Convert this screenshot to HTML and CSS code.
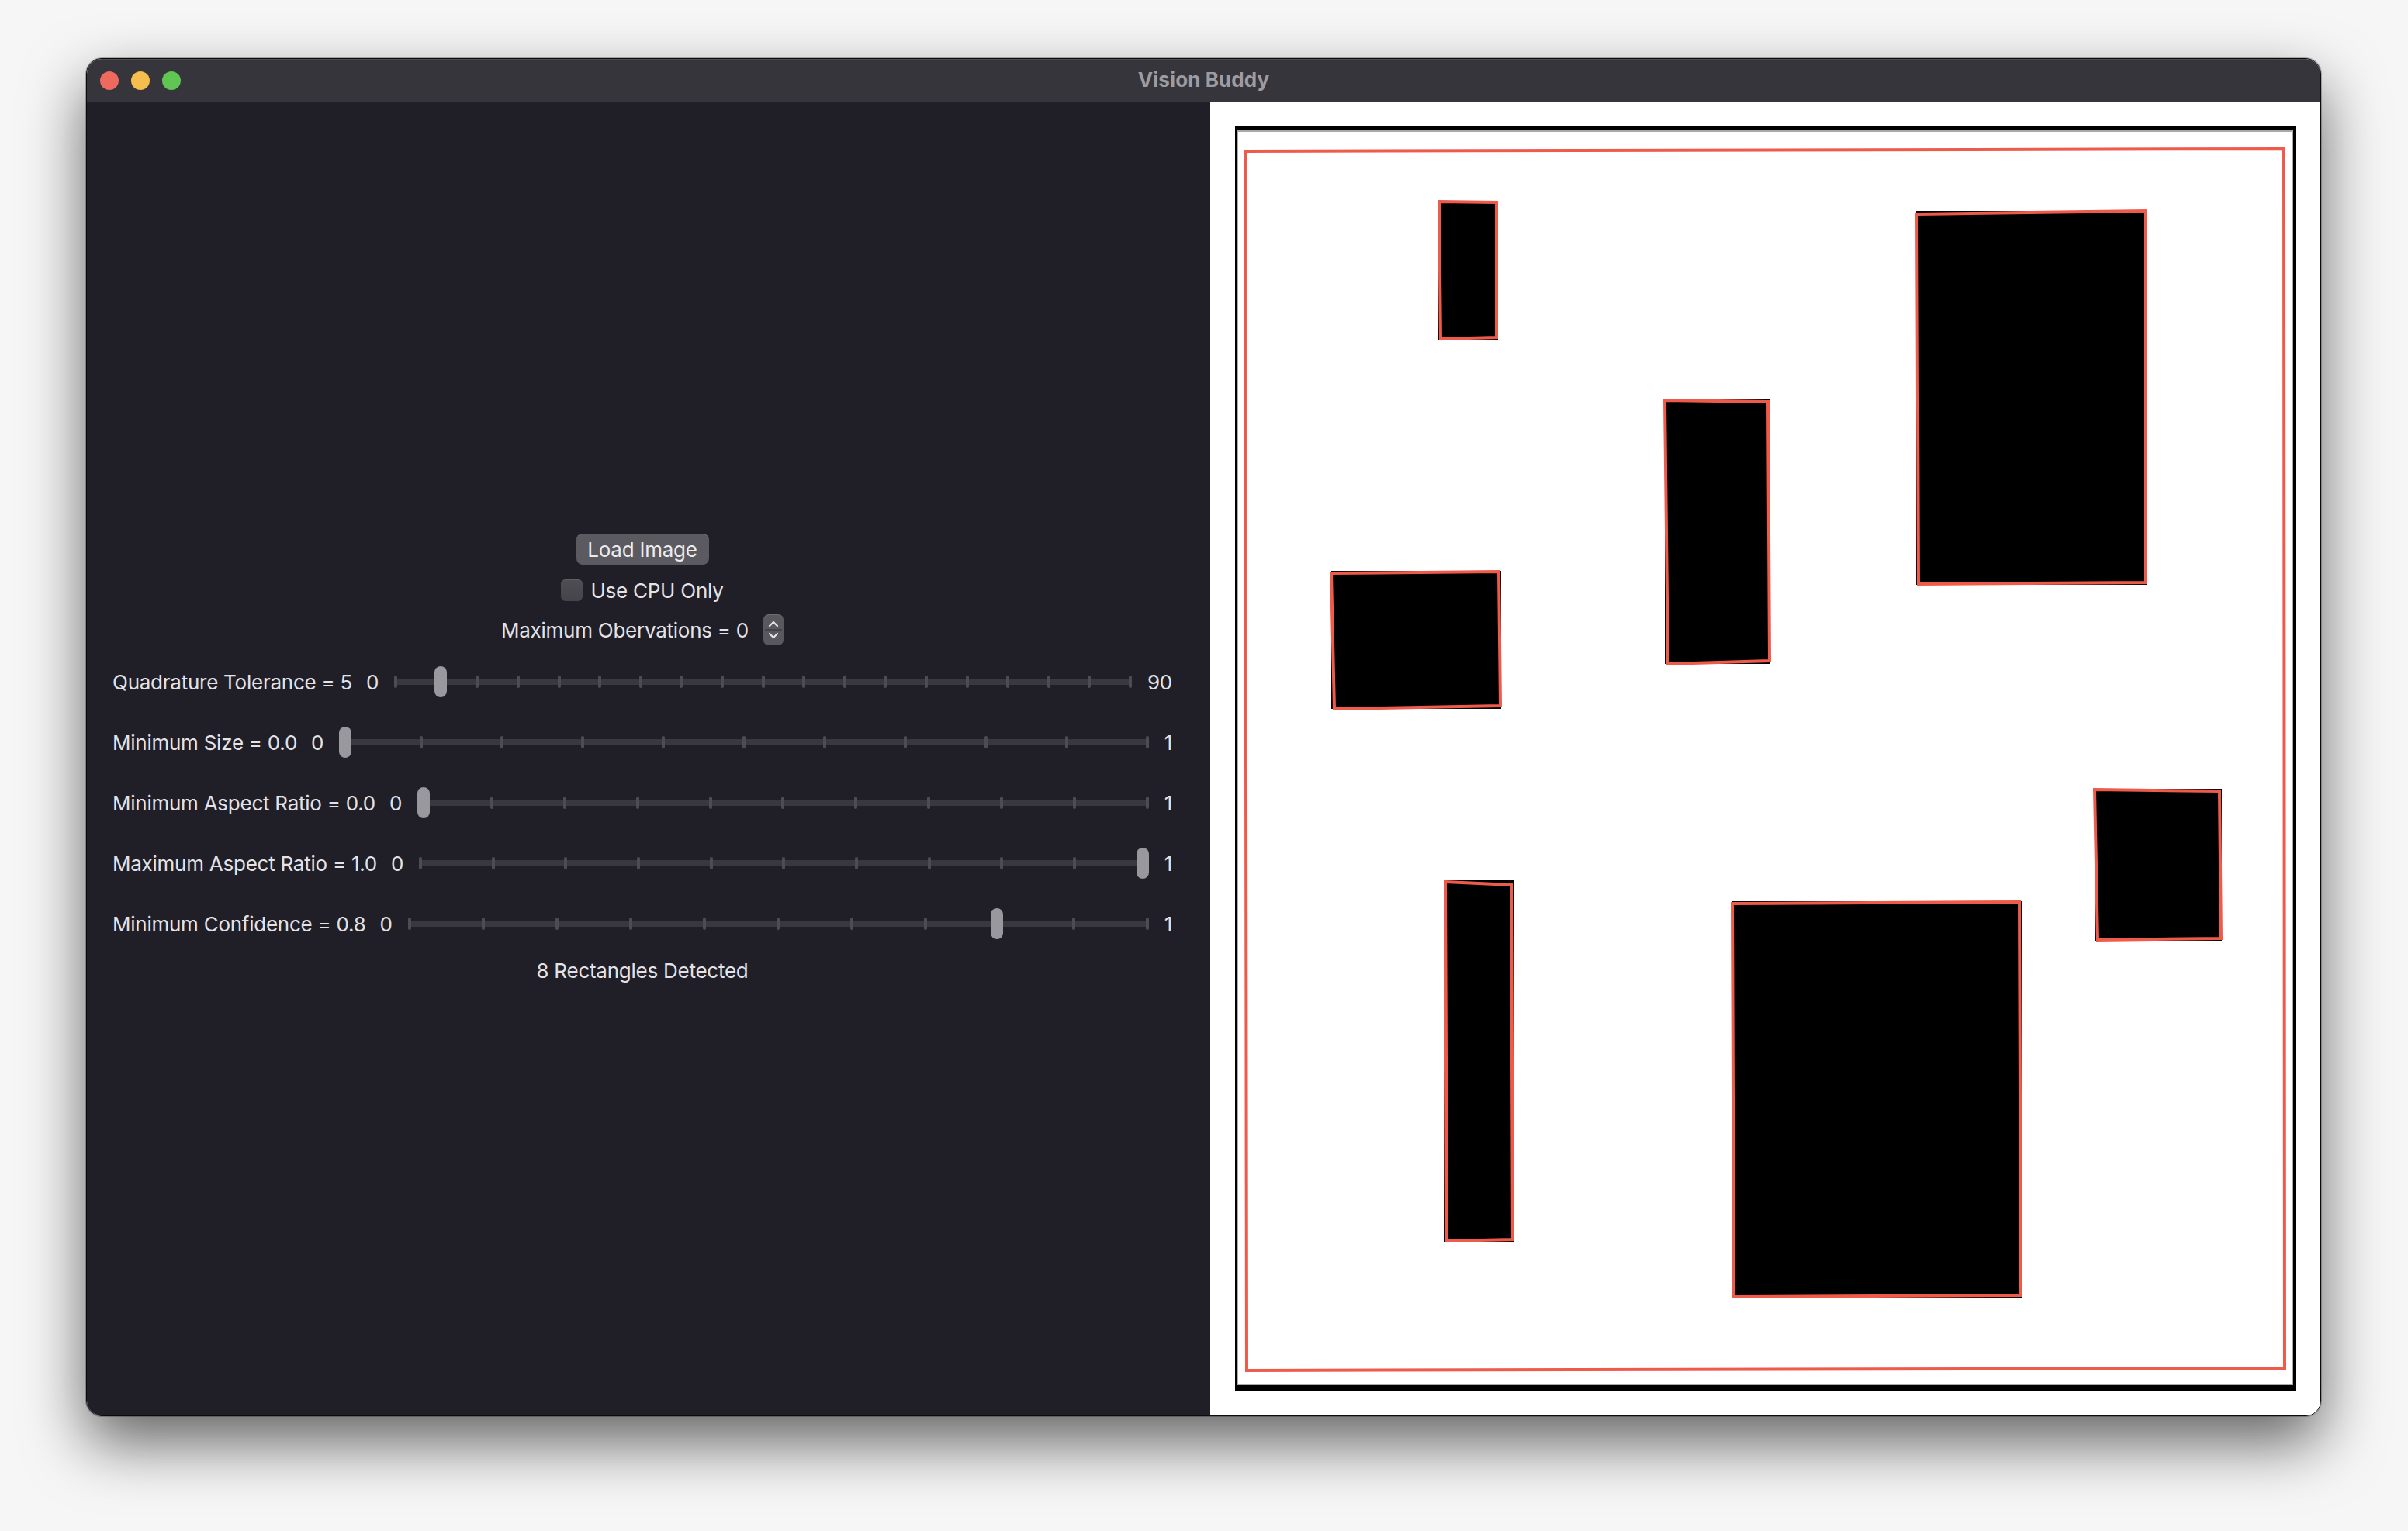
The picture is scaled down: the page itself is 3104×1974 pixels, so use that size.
FILE: index.html
```html
<!DOCTYPE html>
<html>
<head>
<meta charset="utf-8">
<title>Vision Buddy</title>
<link rel="stylesheet" href="styles.css">
</head>
<body>
<div class="window">
  <div class="titlebar">
    <div class="lights">
      <span class="light red"></span>
      <span class="light yellow"></span>
      <span class="light green"></span>
    </div>
    <div class="title">Vision Buddy</div>
  </div>
  <div class="content">
    <div class="controls">
      <div class="button">Load Image</div>
      <div class="check-row">
        <span class="checkbox"></span>
        <span class="text">Use CPU Only</span>
      </div>
      <div class="stepper-row">
        <span class="text">Maximum Obervations = 0</span>
        <span class="stepper">
          <svg width="26" height="40" viewBox="0 0 26 40">
            <path d="M8 15 L13 10 L18 15" fill="none" stroke="#e4e3e8" stroke-width="2.2" stroke-linecap="round" stroke-linejoin="round"/>
            <line x1="2" y1="20" x2="24" y2="20" stroke="#3e3d43" stroke-width="1.5"/>
            <path d="M8 25 L13 30 L18 25" fill="none" stroke="#e4e3e8" stroke-width="2.2" stroke-linecap="round" stroke-linejoin="round"/>
          </svg>
        </span>
      </div>

      <div class="slider-row first">
        <span class="label">Quadrature Tolerance = 5</span>
        <span class="minv">0</span>
        <div class="slider">
          <div class="track"></div>
          <div class="ticks"><i></i><i></i><i></i><i></i><i></i><i></i><i></i><i></i><i></i><i></i><i></i><i></i><i></i><i></i><i></i><i></i><i></i><i></i><i></i></div>
          <div class="thumb" style="left: calc(0.05556 * (100% - 16px))"></div>
        </div>
        <span class="maxv">90</span>
      </div>

      <div class="slider-row">
        <span class="label">Minimum Size = 0.0</span>
        <span class="minv">0</span>
        <div class="slider">
          <div class="track"></div>
          <div class="ticks"><i></i><i></i><i></i><i></i><i></i><i></i><i></i><i></i><i></i><i></i><i></i></div>
          <div class="thumb" style="left: calc(0 * (100% - 16px))"></div>
        </div>
        <span class="maxv">1</span>
      </div>

      <div class="slider-row">
        <span class="label">Minimum Aspect Ratio = 0.0</span>
        <span class="minv">0</span>
        <div class="slider">
          <div class="track"></div>
          <div class="ticks"><i></i><i></i><i></i><i></i><i></i><i></i><i></i><i></i><i></i><i></i><i></i></div>
          <div class="thumb" style="left: calc(0 * (100% - 16px))"></div>
        </div>
        <span class="maxv">1</span>
      </div>

      <div class="slider-row">
        <span class="label">Maximum Aspect Ratio = 1.0</span>
        <span class="minv">0</span>
        <div class="slider">
          <div class="track"></div>
          <div class="ticks"><i></i><i></i><i></i><i></i><i></i><i></i><i></i><i></i><i></i><i></i><i></i></div>
          <div class="thumb" style="left: calc(1 * (100% - 16px))"></div>
        </div>
        <span class="maxv">1</span>
      </div>

      <div class="slider-row">
        <span class="label">Minimum Confidence = 0.8</span>
        <span class="minv">0</span>
        <div class="slider">
          <div class="track"></div>
          <div class="ticks"><i></i><i></i><i></i><i></i><i></i><i></i><i></i><i></i><i></i><i></i><i></i></div>
          <div class="thumb" style="left: calc(0.8 * (100% - 16px))"></div>
        </div>
        <span class="maxv">1</span>
      </div>

      <div class="status">8 Rectangles Detected</div>
    </div>

    <div class="preview">
      <svg class="image" width="1367" height="1630" viewBox="0 0 1367 1630">
        <rect x="0" y="0" width="1367" height="1630" fill="#000"/>
        <rect x="3" y="5" width="1361" height="1618" fill="#a9a9a9"/>
        <rect x="4" y="7" width="1358" height="1614" fill="#fff"/>

        <g fill="#000">
          <rect x="262" y="96" width="77" height="179"/>
          <rect x="878" y="109" width="298" height="482"/>
          <rect x="554" y="352" width="136" height="341"/>
          <rect x="124" y="573" width="219" height="178"/>
          <rect x="1108" y="854" width="164" height="196"/>
          <rect x="270" y="971" width="89" height="467"/>
          <rect x="640" y="999" width="374" height="511"/>
        </g>

        <g fill="none" stroke="#ef5b4b" stroke-width="4" stroke-linejoin="miter">
          <polygon points="13,32 1352,29 1353,1601 15,1604"/>
          <polygon points="263,97 337,98 337,272 265,274"/>
          <polygon points="879,113 1174,109 1174,588 881,590"/>
          <polygon points="554,353 687,355 689,689 558,693"/>
          <polygon points="124,576 340,574 342,747 128,751"/>
          <polygon points="1108,855 1269,857 1271,1047 1112,1049"/>
          <polygon points="271,974 356,978 358,1435 273,1437"/>
          <polygon points="641,1002 1011,1000 1013,1507 643,1509"/>
        </g>
      </svg>
    </div>
  </div>
</div>
</body>
</html>
```
FILE: styles.css
```css
html, body {
  margin: 0;
  padding: 0;
}

body {
  width: 3104px;
  height: 1974px;
  background: #f6f6f6;
  overflow: hidden;
  font-family: "Inter", "Liberation Sans", sans-serif;
}

.window {
  margin: 75px 0 0 111px;
  width: 2881px;
  height: 1751px;
  box-sizing: border-box;
  border: 1px solid #0b0b0d;
  border-radius: 20px;
  overflow: hidden;
  display: flex;
  flex-direction: column;
  box-shadow: 0 34px 80px rgba(0, 0, 0, 0.6), 0 0 0 1px rgba(0, 0, 0, 0.25);
}

.titlebar {
  position: relative;
  height: 56px;
  flex: 0 0 56px;
  box-sizing: border-box;
  padding-bottom: 3px;
  background: #36353b;
  border-bottom: 1px solid #0a0a0c;
  box-shadow: inset 0 1px 0 rgba(255, 255, 255, 0.12);
  display: flex;
  align-items: center;
  justify-content: center;
}

.lights {
  position: absolute;
  left: 17px;
  top: 16px;
  display: flex;
  gap: 16px;
}

.light {
  width: 24px;
  height: 24px;
  border-radius: 50%;
}

.light.red { background: #ee6a5f; }
.light.yellow { background: #f5be4f; }
.light.green { background: #61c554; }

.title {
  color: #9d9ca2;
  font-size: 26px;
  font-weight: 700;
  letter-spacing: 0.1px;
}

.content {
  flex: 1;
  display: flex;
  min-height: 0;
}

.controls {
  width: 1448px;
  flex: 0 0 1448px;
  box-sizing: border-box;
  background: #201f27;
  padding: 0 49px 1px 33px;
  display: flex;
  flex-direction: column;
  align-items: center;
  justify-content: center;
  color: #e3e2e7;
  font-size: 26px;
  letter-spacing: -0.25px;
}

.button {
  width: 171px;
  height: 40px;
  border-radius: 8px;
  background: #5b5a60;
  box-shadow: inset 0 1px 0 rgba(255, 255, 255, 0.12);
  display: flex;
  align-items: center;
  justify-content: center;
  color: #ecebef;
}

.check-row {
  margin-top: 19px;
  height: 28px;
  display: flex;
  align-items: center;
  gap: 10px;
}

.checkbox {
  width: 28px;
  height: 28px;
  box-sizing: border-box;
  border-radius: 6px;
  background: linear-gradient(#4f4e55, #45444b);
  box-shadow: inset 0 1px 0 rgba(255, 255, 255, 0.1);
}

.stepper-row {
  margin-top: 17px;
  height: 40px;
  display: flex;
  align-items: center;
  gap: 19px;
}

.stepper {
  width: 26px;
  height: 40px;
  border-radius: 7px;
  background: #59585e;
  box-shadow: inset 0 1px 0 rgba(255, 255, 255, 0.12);
  display: block;
}

.stepper svg {
  display: block;
}

.slider-row {
  align-self: stretch;
  height: 40px;
  margin-top: 38px;
  display: flex;
  align-items: center;
  gap: 18px;
}

.slider-row.first {
  margin-top: 27px;
}

.label, .minv, .maxv {
  white-space: nowrap;
  flex: 0 0 auto;
}

.slider {
  position: relative;
  flex: 1;
  height: 40px;
  margin-left: 2px;
  margin-right: 2px;
}

.track {
  position: absolute;
  left: 0;
  right: 0;
  top: 16px;
  height: 8px;
  border-radius: 4px;
  background: #39383f;
}

.ticks {
  position: absolute;
  left: 0;
  right: 0;
  top: 12px;
  height: 16px;
  display: flex;
  justify-content: space-between;
}

.ticks i {
  width: 4px;
  height: 16px;
  border-radius: 2px;
  background: #4d4c53;
}

.thumb {
  position: absolute;
  top: 0;
  width: 16px;
  height: 40px;
  border-radius: 8px;
  background: #99989e;
}

.status {
  margin-top: 25px;
  height: 32px;
  line-height: 32px;
}

.preview {
  flex: 1;
  background: #fff;
  padding: 31px 32px;
  box-sizing: border-box;
}

.image {
  display: block;
}
```
